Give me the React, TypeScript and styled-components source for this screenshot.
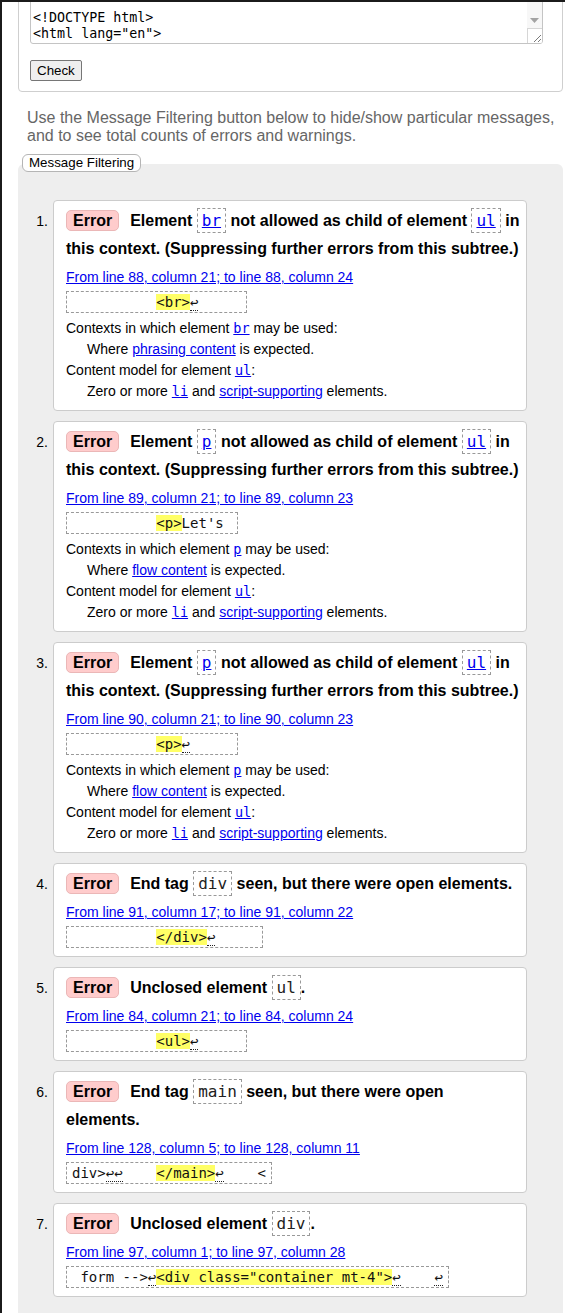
import React from 'react';
import styled, { createGlobalStyle } from 'styled-components';

const GlobalStyle = createGlobalStyle`
  html, body {
    margin: 0;
    padding: 0;
    background: #fff;
  }
  body {
    font-family: "Liberation Sans", Arial, sans-serif;
    color: #000;
  }
`;

const MONO = '"DejaVu Sans Mono", "Liberation Mono", monospace';

const Page = styled.div`
  width: 565px;
  height: 1313px;
  box-sizing: border-box;
  border-top: 2px solid #1b1b1b;
  border-left: 2px solid #1b1b1b;
  padding: 0 2px 0 16px;
  overflow: hidden;
  display: flex;
  flex-direction: column;
`;

const Fieldset = styled.div`
  margin-top: -31px;
  border: 1px solid #cfcfcf;
  border-radius: 4px;
  padding: 0 19px 10px 11px;
  display: flex;
  flex-direction: column;
`;

const TextArea = styled.div`
  height: 70px;
  display: flex;
  border: 1px solid #c4c4c4;
  border-radius: 3px;
  background: #fff;
  overflow: hidden;
`;

const TextLines = styled.div`
  flex: 1;
  display: flex;
  flex-direction: column;
  justify-content: flex-end;
  padding: 0 2px 1px;
  font-family: ${MONO};
  font-size: 13.33px;
  line-height: 16px;
  white-space: pre;
  color: #000;
`;

const Scroll = styled.div`
  width: 15px;
  flex-shrink: 0;
  display: flex;
  flex-direction: column;
  justify-content: flex-end;
  background: #f7f7f7;
`;

const ArrowBtn = styled.div`
  height: 16px;
  display: flex;
  align-items: center;
  justify-content: center;
`;

const Corner = styled.div`
  height: 14px;
  border-top: 1px solid #d6d6d6;
  border-left: 1px solid #d6d6d6;
  background: #fff;
  display: flex;
  align-items: flex-end;
  justify-content: flex-end;
`;

const CheckButton = styled.button`
  align-self: flex-start;
  margin-top: 16px;
  padding: 1px 6px;
  font-family: "Liberation Sans", Arial, sans-serif;
  font-size: 13.33px;
  line-height: 17px;
  color: #000;
  background: #efefef;
  border: 1px solid #767676;
  border-radius: 2px;
`;

const Desc = styled.p`
  margin: 17px 0 0 9px;
  font-size: 16px;
  line-height: 18px;
  color: #666;
`;

const FilterButton = styled.button`
  position: relative;
  z-index: 1;
  align-self: flex-start;
  margin: 9px 0 0 4px;
  height: 18px;
  padding: 0 6px;
  font-family: "Liberation Sans", Arial, sans-serif;
  font-size: 13.33px;
  line-height: 16px;
  color: #000;
  background: #fff;
  border: 1px solid #b5b5b5;
  border-radius: 6px;
`;

const Panel = styled.div`
  flex: 1 0 auto;
  margin-top: -8px;
  padding: 36px 36px 40px 0;
  background: #eee;
  border-radius: 6px 6px 0 0;
`;

const List = styled.ol`
  list-style: none;
  margin: 0;
  padding: 0;
  display: flex;
  flex-direction: column;
  gap: 10px;
`;

const Item = styled.li`
  display: flex;
`;

const Num = styled.span`
  width: 35px;
  flex-shrink: 0;
  box-sizing: border-box;
  padding: 7px 5px 0 0;
  text-align: right;
  font-size: 14px;
  line-height: 28px;
`;

const Card = styled.div`
  flex: 1;
  min-width: 0;
  background: #fff;
  border: 1px solid #ccc;
  border-radius: 4px;
  padding: 6px 6px 8px 12px;
`;

const Title = styled.p`
  margin: 0;
  font-size: 16px;
  font-weight: bold;
  line-height: 28px;
`;

const Badge = styled.span`
  display: inline-block;
  margin-right: 11px;
  padding: 0 6px;
  line-height: 19px;
  background: #fcc;
  border: 1px solid #ebb7b7;
  border-radius: 5px;
`;

const Code = styled.code<{ $link?: boolean }>`
  font-family: ${MONO};
  font-weight: normal;
  font-size: 16px;
  padding: 2px 4px;
  border: 1px dashed #999;
  color: ${(p) => (p.$link ? '#00e' : '#222')};
`;

const Link = styled.a`
  color: #00e;
  text-decoration: underline;
`;

const LocRow = styled.p`
  margin: 4px 0 0;
  font-size: 14px;
  line-height: 20px;
`;

const ExtractRow = styled.div`
  margin-top: 4px;
  display: flex;
`;

const Extract = styled.code`
  display: block;
  padding: 0 5px;
  border: 1px dashed #999;
  font-family: ${MONO};
  font-size: 14px;
  line-height: 20px;
  white-space: pre;
  color: #111;
`;

const Hl = styled.b`
  font-weight: normal;
  background: #ff6;
`;

const Lf = styled.span`
  border-bottom: 1px dotted #222;
`;

const Contexts = styled.div`
  margin-top: 5px;
  font-size: 14px;
  line-height: 21px;
`;

const Line = styled.div<{ $indent?: boolean }>`
  padding-left: ${(p) => (p.$indent ? '21px' : '0')};
`;

const SmallCode = styled.code`
  font-family: ${MONO};
  font-size: 13.5px;
`;

type Ctx = { el: string; where: string; model: string };

type Msg = {
  title: React.ReactNode;
  loc: string;
  extract: string;
  ctx?: Ctx;
};

const renderExtract = (src: string) =>
  src.split(/(«[^»]*»|¶+)/).map((part, i) => {
    if (part.startsWith('«')) return <Hl key={i}>{part.slice(1, -1)}</Hl>;
    if (part.startsWith('¶')) return <Lf key={i}>{'↩'.repeat(part.length)}</Lf>;
    return part;
  });

const notAllowed = (el: string) => (
  <>
    Element <Link href="#"><Code $link>{el}</Code></Link> not allowed as child of element{' '}
    <Link href="#"><Code $link>ul</Code></Link> in this context. (Suppressing further errors from this subtree.)
  </>
);

const messages: Msg[] = [
  {
    title: notAllowed('br'),
    loc: 'From line 88, column 21; to line 88, column 24',
    extract: '          «<br>»¶     ',
    ctx: { el: 'br', where: 'phrasing content', model: 'ul' },
  },
  {
    title: notAllowed('p'),
    loc: 'From line 89, column 21; to line 89, column 23',
    extract: "          «<p>»Let's ",
    ctx: { el: 'p', where: 'flow content', model: 'ul' },
  },
  {
    title: notAllowed('p'),
    loc: 'From line 90, column 21; to line 90, column 23',
    extract: '          «<p>»¶     ',
    ctx: { el: 'p', where: 'flow content', model: 'ul' },
  },
  {
    title: <>End tag <Code>div</Code> seen, but there were open elements.</>,
    loc: 'From line 91, column 17; to line 91, column 22',
    extract: '          «</div>»¶     ',
  },
  {
    title: <>Unclosed element <Code>ul</Code>.</>,
    loc: 'From line 84, column 21; to line 84, column 24',
    extract: '          «<ul>»¶     ',
  },
  {
    title: <>End tag <Code>main</Code> seen, but there were open elements.</>,
    loc: 'From line 128, column 5; to line 128, column 11',
    extract: 'div>¶¶    «</main>»¶    <',
  },
  {
    title: <>Unclosed element <Code>div</Code>.</>,
    loc: 'From line 97, column 1; to line 97, column 28',
    extract: ' form -->¶«<div class="container mt-4">»¶    ¶',
  },
];

const ContextInfo: React.FC<{ ctx: Ctx }> = ({ ctx }) => (
  <Contexts>
    <Line>
      Contexts in which element <Link href="#"><SmallCode>{ctx.el}</SmallCode></Link> may be used:
    </Line>
    <Line $indent>
      Where <Link href="#">{ctx.where}</Link> is expected.
    </Line>
    <Line>
      Content model for element <Link href="#"><SmallCode>{ctx.model}</SmallCode></Link>:
    </Line>
    <Line $indent>
      Zero or more <Link href="#"><SmallCode>li</SmallCode></Link> and{' '}
      <Link href="#">script-supporting</Link> elements.
    </Line>
  </Contexts>
);

export default function App() {
  return (
    <>
      <GlobalStyle />
      <Page>
        <Fieldset>
          <TextArea>
            <TextLines>
              <div>{'<!DOCTYPE html>'}</div>
              <div>{'<html lang="en">'}</div>
            </TextLines>
            <Scroll>
              <ArrowBtn>
                <svg width="9" height="5" viewBox="0 0 9 5">
                  <path d="M0 0h9L4.5 5z" fill="#a3a3a3" />
                </svg>
              </ArrowBtn>
              <Corner>
                <svg width="10" height="10" viewBox="0 0 10 10">
                  <path d="M2 9L9 2M6 9L9 6" stroke="#7a7a7a" strokeWidth="1" />
                </svg>
              </Corner>
            </Scroll>
          </TextArea>
          <CheckButton>Check</CheckButton>
        </Fieldset>

        <Desc>
          Use the Message Filtering button below to hide/show particular messages, and to see
          total counts of errors and warnings.
        </Desc>
        <FilterButton>Message Filtering</FilterButton>

        <Panel>
          <List>
            {messages.map((m, i) => (
              <Item key={i}>
                <Num>{i + 1}.</Num>
                <Card>
                  <Title>
                    <Badge>Error</Badge>
                    {m.title}
                  </Title>
                  <LocRow>
                    <Link href="#">{m.loc}</Link>
                  </LocRow>
                  <ExtractRow>
                    <Extract>{renderExtract(m.extract)}</Extract>
                  </ExtractRow>
                  {m.ctx && <ContextInfo ctx={m.ctx} />}
                </Card>
              </Item>
            ))}
          </List>
        </Panel>
      </Page>
    </>
  );
}
